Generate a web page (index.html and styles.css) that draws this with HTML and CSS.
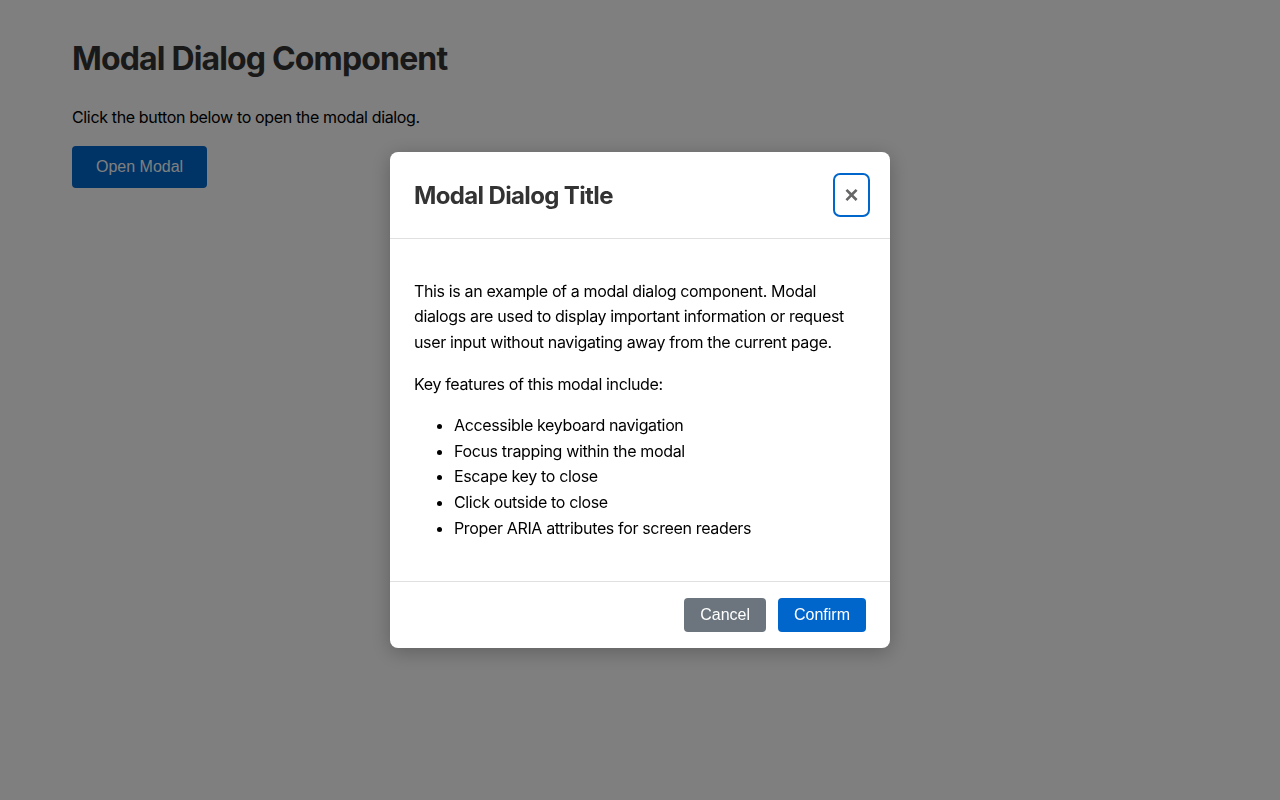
FILE: index.html
```html
<!DOCTYPE html>
<html lang="en">
<head>
<meta charset="utf-8">
<title>Modal Dialog Component</title>
<link rel="stylesheet" href="styles.css">
</head>
<body>
<main class="page">
  <h1 class="page-title">Modal Dialog Component</h1>
  <p class="page-text">Click the button below to open the modal dialog.</p>
  <button class="btn btn-open" type="button">Open Modal</button>
</main>

<div class="overlay">
  <div class="modal" role="dialog" aria-modal="true" aria-labelledby="modal-title">
    <header class="modal-header">
      <h2 class="modal-title" id="modal-title">Modal Dialog Title</h2>
      <button class="modal-close" type="button" aria-label="Close">&times;</button>
    </header>
    <div class="modal-body">
      <p>This is an example of a modal dialog component. Modal dialogs are used to display important information or request user input without navigating away from the current page.</p>
      <p>Key features of this modal include:</p>
      <ul>
        <li>Accessible keyboard navigation</li>
        <li>Focus trapping within the modal</li>
        <li>Escape key to close</li>
        <li>Click outside to close</li>
        <li>Proper ARIA attributes for screen readers</li>
      </ul>
    </div>
    <footer class="modal-footer">
      <button class="btn btn-secondary" type="button">Cancel</button>
      <button class="btn btn-primary" type="button">Confirm</button>
    </footer>
  </div>
</div>
</body>
</html>
```

FILE: styles.css
```css
* {
  box-sizing: border-box;
}

html, body {
  margin: 0;
  height: 100%;
}

body {
  font-family: Inter, "Noto Sans", sans-serif;
  font-size: 16px;
  line-height: 1.6;
  letter-spacing: -0.022em;
  color: #000;
  background: #fff;
}

.page {
  padding: 40px 72px;
}

.page-title {
  margin: 0 0 27px;
  font-size: 32px;
  line-height: 38px;
  font-weight: 700;
  letter-spacing: -0.84px;
  color: #333;
}

.page-text {
  margin: 0 0 15px;
}

.btn {
  font-family: "Liberation Sans", Arial, sans-serif;
  font-size: 16px;
  line-height: 18px;
  letter-spacing: 0;
  border: none;
  border-radius: 4px;
  color: #fff;
  cursor: pointer;
}

.btn-open {
  padding: 12px 24px;
  background: #0066cc;
}

.overlay {
  position: fixed;
  inset: 0;
  background: rgba(0, 0, 0, 0.5);
  display: flex;
  align-items: center;
  justify-content: center;
}

.modal {
  width: 500px;
  background: #fff;
  border-radius: 8px;
  box-shadow: 0 4px 20px rgba(0, 0, 0, 0.25);
  overflow: hidden;
}

.modal-header {
  display: flex;
  align-items: center;
  justify-content: space-between;
  padding: 24px;
  border-bottom: 1px solid #e0e0e0;
}

.modal-title {
  margin: 0;
  padding-top: 2px;
  font-size: 24px;
  line-height: 30px;
  font-weight: 700;
  letter-spacing: -0.64px;
  color: #333;
}

.modal-close {
  width: 31px;
  height: 38px;
  margin-right: -1px;
  padding: 0;
  border: none;
  background: transparent;
  border-radius: 4px;
  outline: 2px solid #0066cc;
  outline-offset: 1px;
  font-family: "Liberation Sans", Arial, sans-serif;
  font-size: 24px;
  font-weight: 700;
  line-height: 1;
  letter-spacing: 0;
  color: #666;
  cursor: pointer;
}

.modal-body {
  padding: 24px;
}

.modal-body p,
.modal-body ul {
  margin: 16px 0;
}

.modal-body ul {
  padding-left: 40px;
}

.modal-footer {
  display: flex;
  justify-content: flex-end;
  gap: 12px;
  padding: 16px 24px;
  border-top: 1px solid #e0e0e0;
}

.btn-secondary,
.btn-primary {
  padding: 8px 16px;
}

.btn-secondary {
  background: #6c757d;
}

.btn-primary {
  background: #0066cc;
}
```
